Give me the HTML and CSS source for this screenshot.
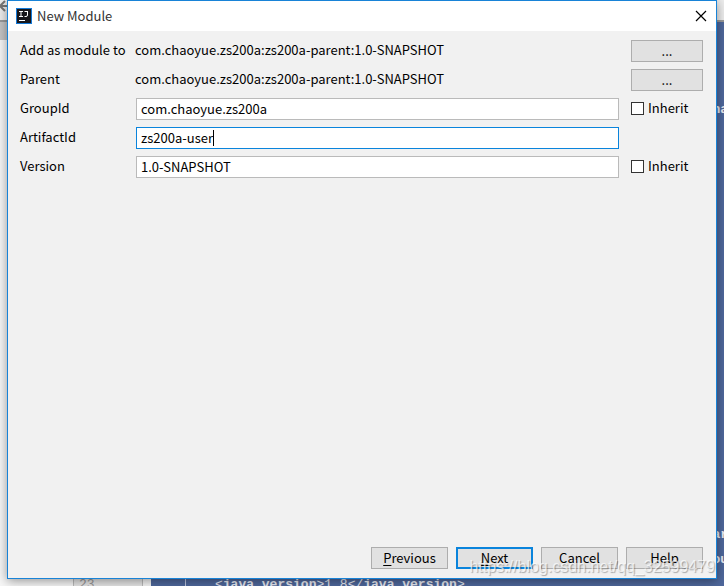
FILE: index.html
```
<!DOCTYPE html>
<html lang="en">
<head>
    <meta charset="UTF-8">
    <meta name="viewport" content="width=device-width, initial-scale=1.0">
    <title>New Module</title>
    <link rel="stylesheet" href="styles.css">
</head>
<body>
    <!-- editor behind the dialog -->
    <div class="editor" aria-hidden="true">
        <div class="toolbar">
            <svg width="8" height="12" viewBox="0 0 8 12"><path d="M5 1L0 6l5 5M0 6h8" fill="none" stroke="#777" stroke-width="2"/></svg>
        </div>
        <div class="workspace">
            <div class="project"></div>
            <div class="gutter"><span class="line-23">23</span></div>
            <div class="fold"></div>
            <div class="code">
                <span class="line line-4">na</span>
                <span class="line line-21">ar</span>
                <span class="line line-22">ou</span>
                <span class="line line-23 tag">&lt;<b>java.version</b>&gt;1.8&lt;/<b>java.version</b>&gt;</span>
            </div>
        </div>
    </div>

    <main class="dialog">
        <header class="titlebar">
            <svg class="logo" width="16" height="16" viewBox="0 0 16 16">
                <rect width="16" height="16" fill="#1479d7"/>
                <rect x="1" y="1" width="14" height="14" fill="#17171c"/>
                <path d="M3 3.5h4M5 3.5v5M3 8.5h4M8.500 3.500H12M11.500 3v4q0 1.500-1.500 1.500H8.500" fill="none" stroke="#fff"/>
                <path d="M3 12.500h6" stroke="#fff"/>
            </svg>
            <h1>New Module</h1>
            <button class="close" type="button" aria-label="Close">
                <svg width="12" height="12" viewBox="0 0 12 12"><path d="M1 1l10 10M11 1L1 11" stroke="#000" stroke-width="1.200"/></svg>
            </button>
        </header>

        <form class="module-form">
            <div class="fields">
                <span>Add as module to</span>
                <span class="value">com.chaoyue.zs200a:zs200a-parent:1.0-SNAPSHOT</span>
                <button class="btn" type="button" aria-label="Choose module">...</button>

                <span>Parent</span>
                <span class="value">com.chaoyue.zs200a:zs200a-parent:1.0-SNAPSHOT</span>
                <button class="btn" type="button" aria-label="Choose parent">...</button>

                <label for="groupId">GroupId</label>
                <input type="text" id="groupId" value="com.chaoyue.zs200a">
                <label class="inherit"><input type="checkbox" name="inheritGroup">Inherit</label>

                <label for="artifactId">ArtifactId</label>
                <div class="active-field">
                    <input type="text" id="artifactId" value="zs200a-user">
                    <span class="caret"></span>
                </div>
                <span></span>

                <label for="version">Version</label>
                <input type="text" id="version" value="1.0-SNAPSHOT">
                <label class="inherit"><input type="checkbox" name="inheritVersion">Inherit</label>
            </div>

            <div class="actions">
                <button class="btn" type="button"><u>P</u>revious</button>
                <button class="btn btn-default" type="button"><u>N</u>ext</button>
                <button class="btn" type="button">Cancel</button>
                <button class="btn" type="button">Help</button>
            </div>
        </form>
    </main>

    <div class="watermark">https://blog.csdn.net/qq_32599479</div>
</body>
</html>
```
FILE: styles.css
```
* {
    box-sizing: border-box;
}
body {
    margin: 0;
    height: 100vh;
    overflow: hidden;
    position: relative;
    font-family: "Noto Sans CJK SC", "Noto Sans", sans-serif;
    font-size: 13px;
    line-height: 20px;
    color: #000;
}

/* editor */
.editor {
    display: flex;
    flex-direction: column;
    height: 100%;
    overflow: hidden;
    background: #f7f7f7;
}
.toolbar {
    height: 22px;
    flex: none;
    background: #ededed;
    border-bottom: 2px solid #999;
}
.toolbar svg {
    display: block;
}
.workspace {
    flex: 1;
    min-height: 0;
    display: flex;
    font-family: "Liberation Mono", monospace;
    line-height: 25px;
}
.project {
    width: 73px;
    border-top: 18px solid #c4c4c4;
}
.gutter,
.code {
    display: grid;
    grid-template-rows: repeat(23, 25px);
}
.gutter {
    width: 70px;
    padding-left: 5px;
    background: #e6e6e6;
    border-left: 1px solid #bbb;
    border-right: 1px solid #bbb;
    color: #999;
}
.fold {
    width: 8px;
    background: #f5f5f5;
}
.code {
    flex: 1;
    color: #e8ebf3;
    background: linear-gradient(#bcc6df, #bcc6df) 34px 0 / 1px 100% no-repeat #4f689c;
}
.line {
    margin-right: -4px;
    text-align: right;
    font-weight: bold;
}
.line-4 {
    grid-row: 4;
}
.line-21 {
    grid-row: 21;
}
.line-22 {
    grid-row: 22;
}
.line-23 {
    grid-row: 23;
}
.tag {
    text-align: left;
    font-weight: normal;
    padding-left: 64px;
}

/* dialog */
.dialog {
    position: absolute;
    inset: 0 7px 7px;
    display: flex;
    flex-direction: column;
    background: #f1f1f1;
    border: 1px solid #1883d7;
    box-shadow: 0 2px 10px rgba(0, 0, 0, 0.4);
}
.titlebar {
    display: flex;
    align-items: center;
    height: 30px;
    padding: 0 7px 0 8px;
    background: #fff;
}
.titlebar h1 {
    flex: 1;
    margin: 0 0 0 5px;
    font-size: 13px;
    font-weight: normal;
    color: #333;
}
.close {
    display: flex;
    padding: 2px;
    border: 0;
    background: none;
}
.module-form {
    flex: 1;
    display: flex;
    flex-direction: column;
    justify-content: space-between;
    padding: 9px 13px 9px 12px;
}
.fields {
    display: grid;
    grid-template-columns: 116px 1fr 72px;
    grid-auto-rows: 22px;
    row-gap: 7px;
    align-items: start;
}
.value {
    margin-left: -1px;
}
input[type="text"] {
    display: block;
    width: calc(100% - 12px);
    height: 22px;
    padding: 0 4px 2px;
    border: 1px solid #bababa;
    background: #fff;
    font: inherit;
    outline: none;
}
.active-field {
    position: relative;
}
.active-field input[type="text"] {
    border-color: #0a84dc;
}
.caret {
    position: absolute;
    left: 77px;
    top: 3px;
    width: 1px;
    height: 16px;
    background: #000;
}
.inherit {
    display: flex;
    align-items: center;
    gap: 4px;
}
.inherit input {
    appearance: none;
    width: 13px;
    height: 13px;
    margin: 0;
    border: 1px solid #333;
    background: #fff;
}
.inherit input:checked {
    background: #0a84dc;
}
.btn {
    height: 22px;
    padding: 0;
    border: 1px solid #adadad;
    background: #e1e1e1;
    font: inherit;
    line-height: 20px;
    color: #000;
}
.actions {
    display: flex;
    justify-content: flex-end;
    gap: 8px;
}
.actions .btn {
    width: 77px;
}
.actions .btn-default {
    border: 2px solid #0a84dc;
    line-height: 18px;
}
.actions u {
    text-underline-offset: 2px;
}

.watermark {
    position: absolute;
    right: 9px;
    bottom: 9px;
    font-family: "Liberation Sans", sans-serif;
    font-size: 16px;
    color: rgba(255, 255, 255, 0.7);
    text-shadow: 1px 1px 1px rgba(0, 0, 0, 0.3);
    pointer-events: none;
}
```
